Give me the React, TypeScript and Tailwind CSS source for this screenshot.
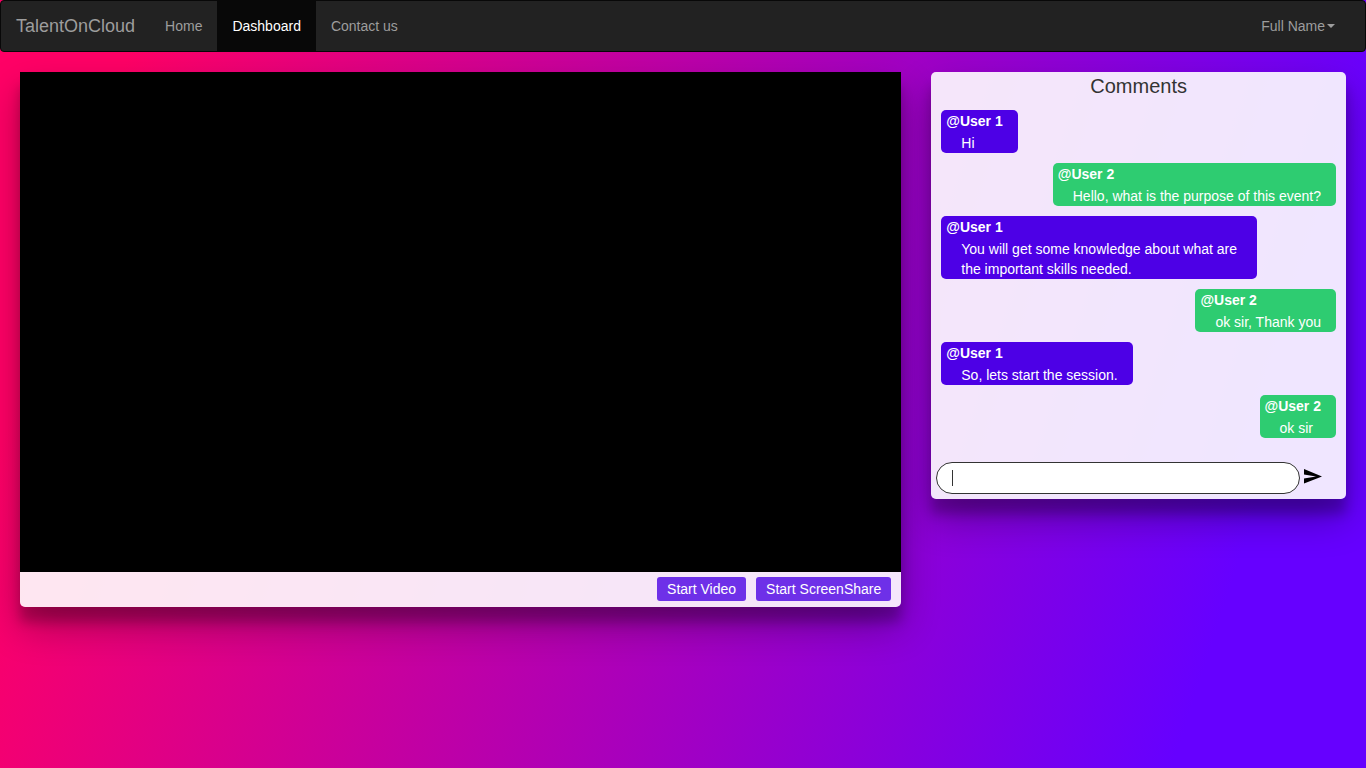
type Comment = { user: 1 | 2; text: string };

const comments: Comment[] = [
  { user: 1, text: "Hi" },
  { user: 2, text: "Hello, what is the purpose of this event?" },
  { user: 1, text: "You will get some knowledge about what are the important skills needed." },
  { user: 2, text: "ok sir, Thank you" },
  { user: 1, text: "So, lets start the session." },
  { user: 2, text: "ok sir" },
];

function Navbar() {
  return (
    <nav className="flex min-h-[52px] items-stretch justify-between rounded border border-[#080808] bg-[#222] text-sm leading-5 text-[#9d9d9d]">
      <div className="flex items-stretch">
        <a href="#" className="flex items-center px-[15px] text-lg leading-5">TalentOnCloud</a>
        <a href="#" className="flex items-center px-[15px]">Home</a>
        <a href="#" aria-current="page" className="flex items-center bg-[#080808] px-[15px] text-white">Dashboard</a>
        <a href="#" className="flex items-center px-[15px]">Contact us</a>
      </div>
      <button type="button" className="mr-[15px] flex items-center gap-[2px] px-[15px]">
        Full Name
        <span className="h-0 w-0 border-x-4 border-t-4 border-x-transparent border-t-current" />
      </button>
    </nav>
  );
}

function Bubble({ user, text }: Comment) {
  const tone = user === 1 ? "self-start bg-[#4d00e6]" : "self-end bg-[#2ecc71]";
  return (
    <li className={`max-w-4/5 rounded-[5px] pr-[15px] pl-[5px] text-white ${tone}`}>
      <p className="leading-[23px] font-bold">@User {user}</p>
      <p className="pl-[15px] leading-5">{text}</p>
    </li>
  );
}

function VideoPanel() {
  return (
    <section className="rounded-b-[5px] bg-white/90 shadow-[0_19px_38px_rgba(0,0,0,0.3),0_15px_12px_rgba(0,0,0,0.22)]">
      <div className="h-[500px] bg-black" />
      <div className="flex justify-end gap-[10px] px-[10px] pt-[5px] pb-[6px] text-white">
        <button type="button" className="rounded-[3px] bg-[#6e30e8] px-[10px] py-[2px]">Start Video</button>
        <button type="button" className="rounded-[3px] bg-[#6e30e8] px-[10px] py-[2px]">Start ScreenShare</button>
      </div>
    </section>
  );
}

function CommentsPanel() {
  return (
    <section className="rounded-[5px] bg-white/90 shadow-[0_19px_38px_rgba(0,0,0,0.3),0_15px_12px_rgba(0,0,0,0.22)]">
      <h2 className="text-center text-xl leading-7">Comments</h2>
      <ul className="flex flex-col gap-[10px] p-[10px]">
        {comments.map((c) => (
          <Bubble key={c.text} {...c} />
        ))}
      </ul>
      <form className="mt-[14px] flex items-center gap-1 pr-6 pb-[5px] pl-[5px]" onSubmit={(e) => e.preventDefault()}>
        <div className="relative min-w-0 flex-1">
          <input
            aria-label="Write a comment"
            className="block h-8 w-full rounded-full border border-[#333] bg-white px-[15px] outline-none"
          />
          <span className="pointer-events-none absolute top-2 left-4 h-4 w-px bg-[#333]" />
        </div>
        <button type="submit" aria-label="Send comment" className="pb-1">
          <svg viewBox="0 0 18 15" className="h-[15px] w-[18px]" fill="currentColor" color="#000">
            <path d="M0 0L18 7.5 0 14.5V9.5L12 7.5 0 5.5z" />
          </svg>
        </button>
      </form>
    </section>
  );
}

export default function App() {
  return (
    <div className="min-h-screen bg-[linear-gradient(108deg,#ff0066_9%,#6600ff_88%)] font-['Liberation_Sans',Arial,sans-serif] text-sm leading-5 text-[#333]">
      <Navbar />
      <main className="grid grid-cols-[17fr_8fr] items-start gap-[30px] p-5">
        <VideoPanel />
        <CommentsPanel />
      </main>
    </div>
  );
}
